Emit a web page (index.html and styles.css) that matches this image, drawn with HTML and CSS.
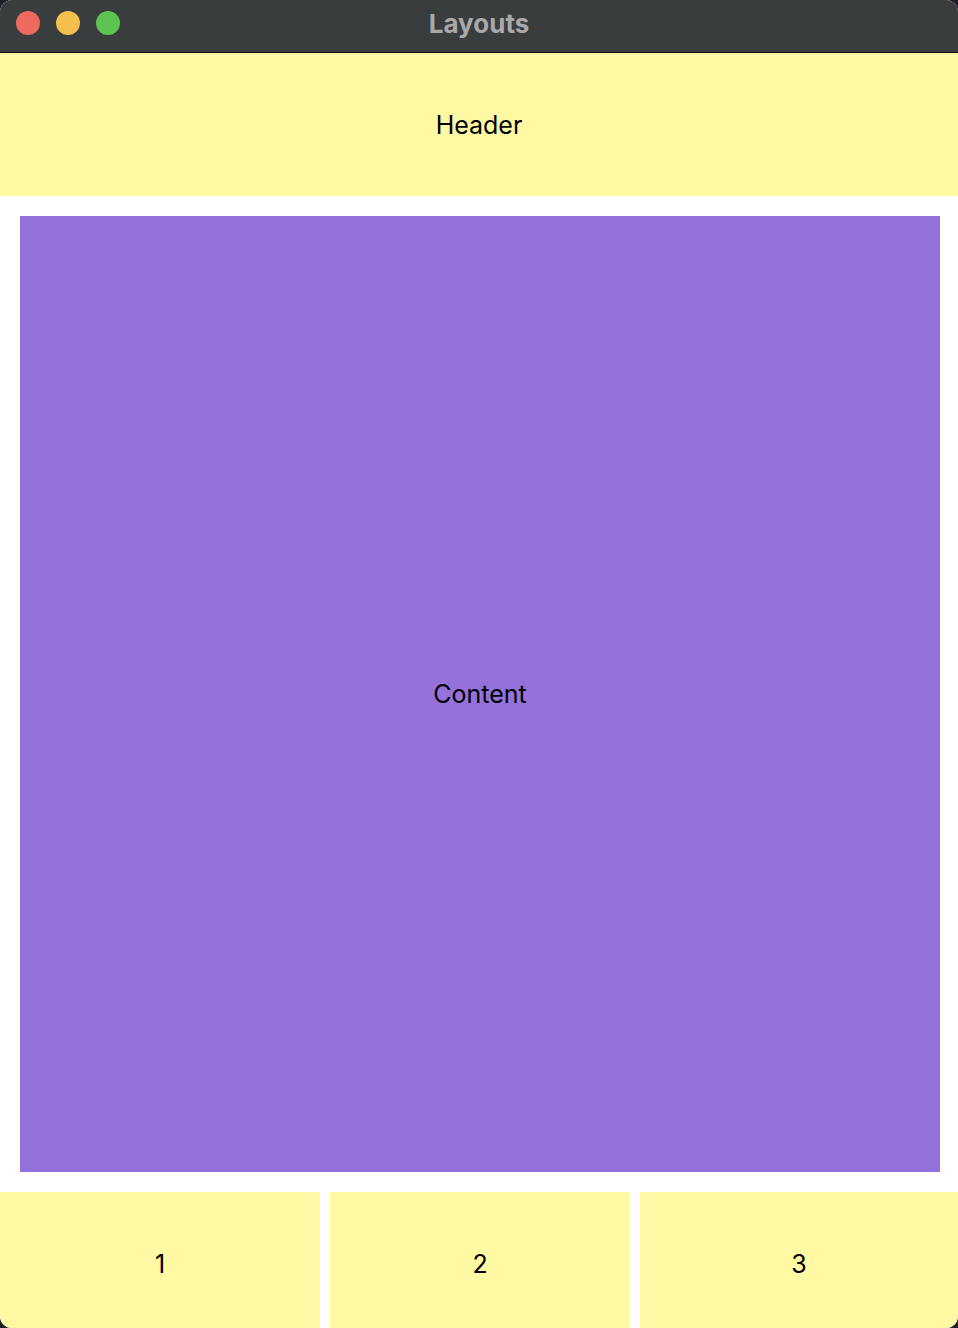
FILE: index.html
```html
<!DOCTYPE html>
<html>
<head>
<meta charset="utf-8">
<link rel="stylesheet" href="styles.css">
</head>
<body>
<div class="window">
  <div class="titlebar">
    <div class="lights">
      <span class="light red"></span>
      <span class="light yellow"></span>
      <span class="light green"></span>
    </div>
    <div class="title">Layouts</div>
  </div>
  <div class="header">Header</div>
  <div class="content">Content</div>
  <div class="footer">
    <div class="cell">1</div>
    <div class="cell">2</div>
    <div class="cell">3</div>
  </div>
</div>
</body>
</html>
```

FILE: styles.css
```css
html, body {
  margin: 0;
  padding: 0;
  background: #1e1e28;
}
.window {
  width: 958px;
  height: 1328px;
  background: #ffffff;
  border-radius: 12px;
  overflow: hidden;
  display: flex;
  flex-direction: column;
  font-family: Inter, "Noto Sans", sans-serif;
  color: #000;
}
.titlebar {
  height: 52px;
  flex: 0 0 52px;
  background: #3a3d3d;
  border-bottom: 1px solid #111;
  position: relative;
  display: flex;
  align-items: center;
  justify-content: center;
}
.lights {
  position: absolute;
  left: 16px;
  top: 11px;
  display: flex;
  gap: 16px;
}
.light {
  width: 24px;
  height: 24px;
  border-radius: 50%;
  display: block;
}
.red { background: #ee6a5f; }
.yellow { background: #f5bf4f; }
.green { background: #5ec451; }
.title {
  font-family: Inter, "Noto Sans", sans-serif;
  font-weight: 700;
  font-size: 26px;
  color: #a9a9a9;
  margin-top: -6px;
}
.header {
  height: 143px;
  flex: 0 0 143px;
  background: #fff9a3;
  display: flex;
  align-items: center;
  justify-content: center;
  font-size: 25px;
}
.content {
  margin: 20px 18px 20px 20px;
  flex: 1;
  background: #9471db;
  display: flex;
  align-items: center;
  justify-content: center;
  font-size: 25px;
}
.footer {
  height: 136px;
  flex: 0 0 136px;
  display: grid;
  grid-template-columns: 320px 300px 1fr;
  gap: 10px;
}
.cell {
  background: #fff9a3;
  display: flex;
  align-items: center;
  justify-content: center;
  padding-top: 8px;
  font-size: 25px;
}
```
